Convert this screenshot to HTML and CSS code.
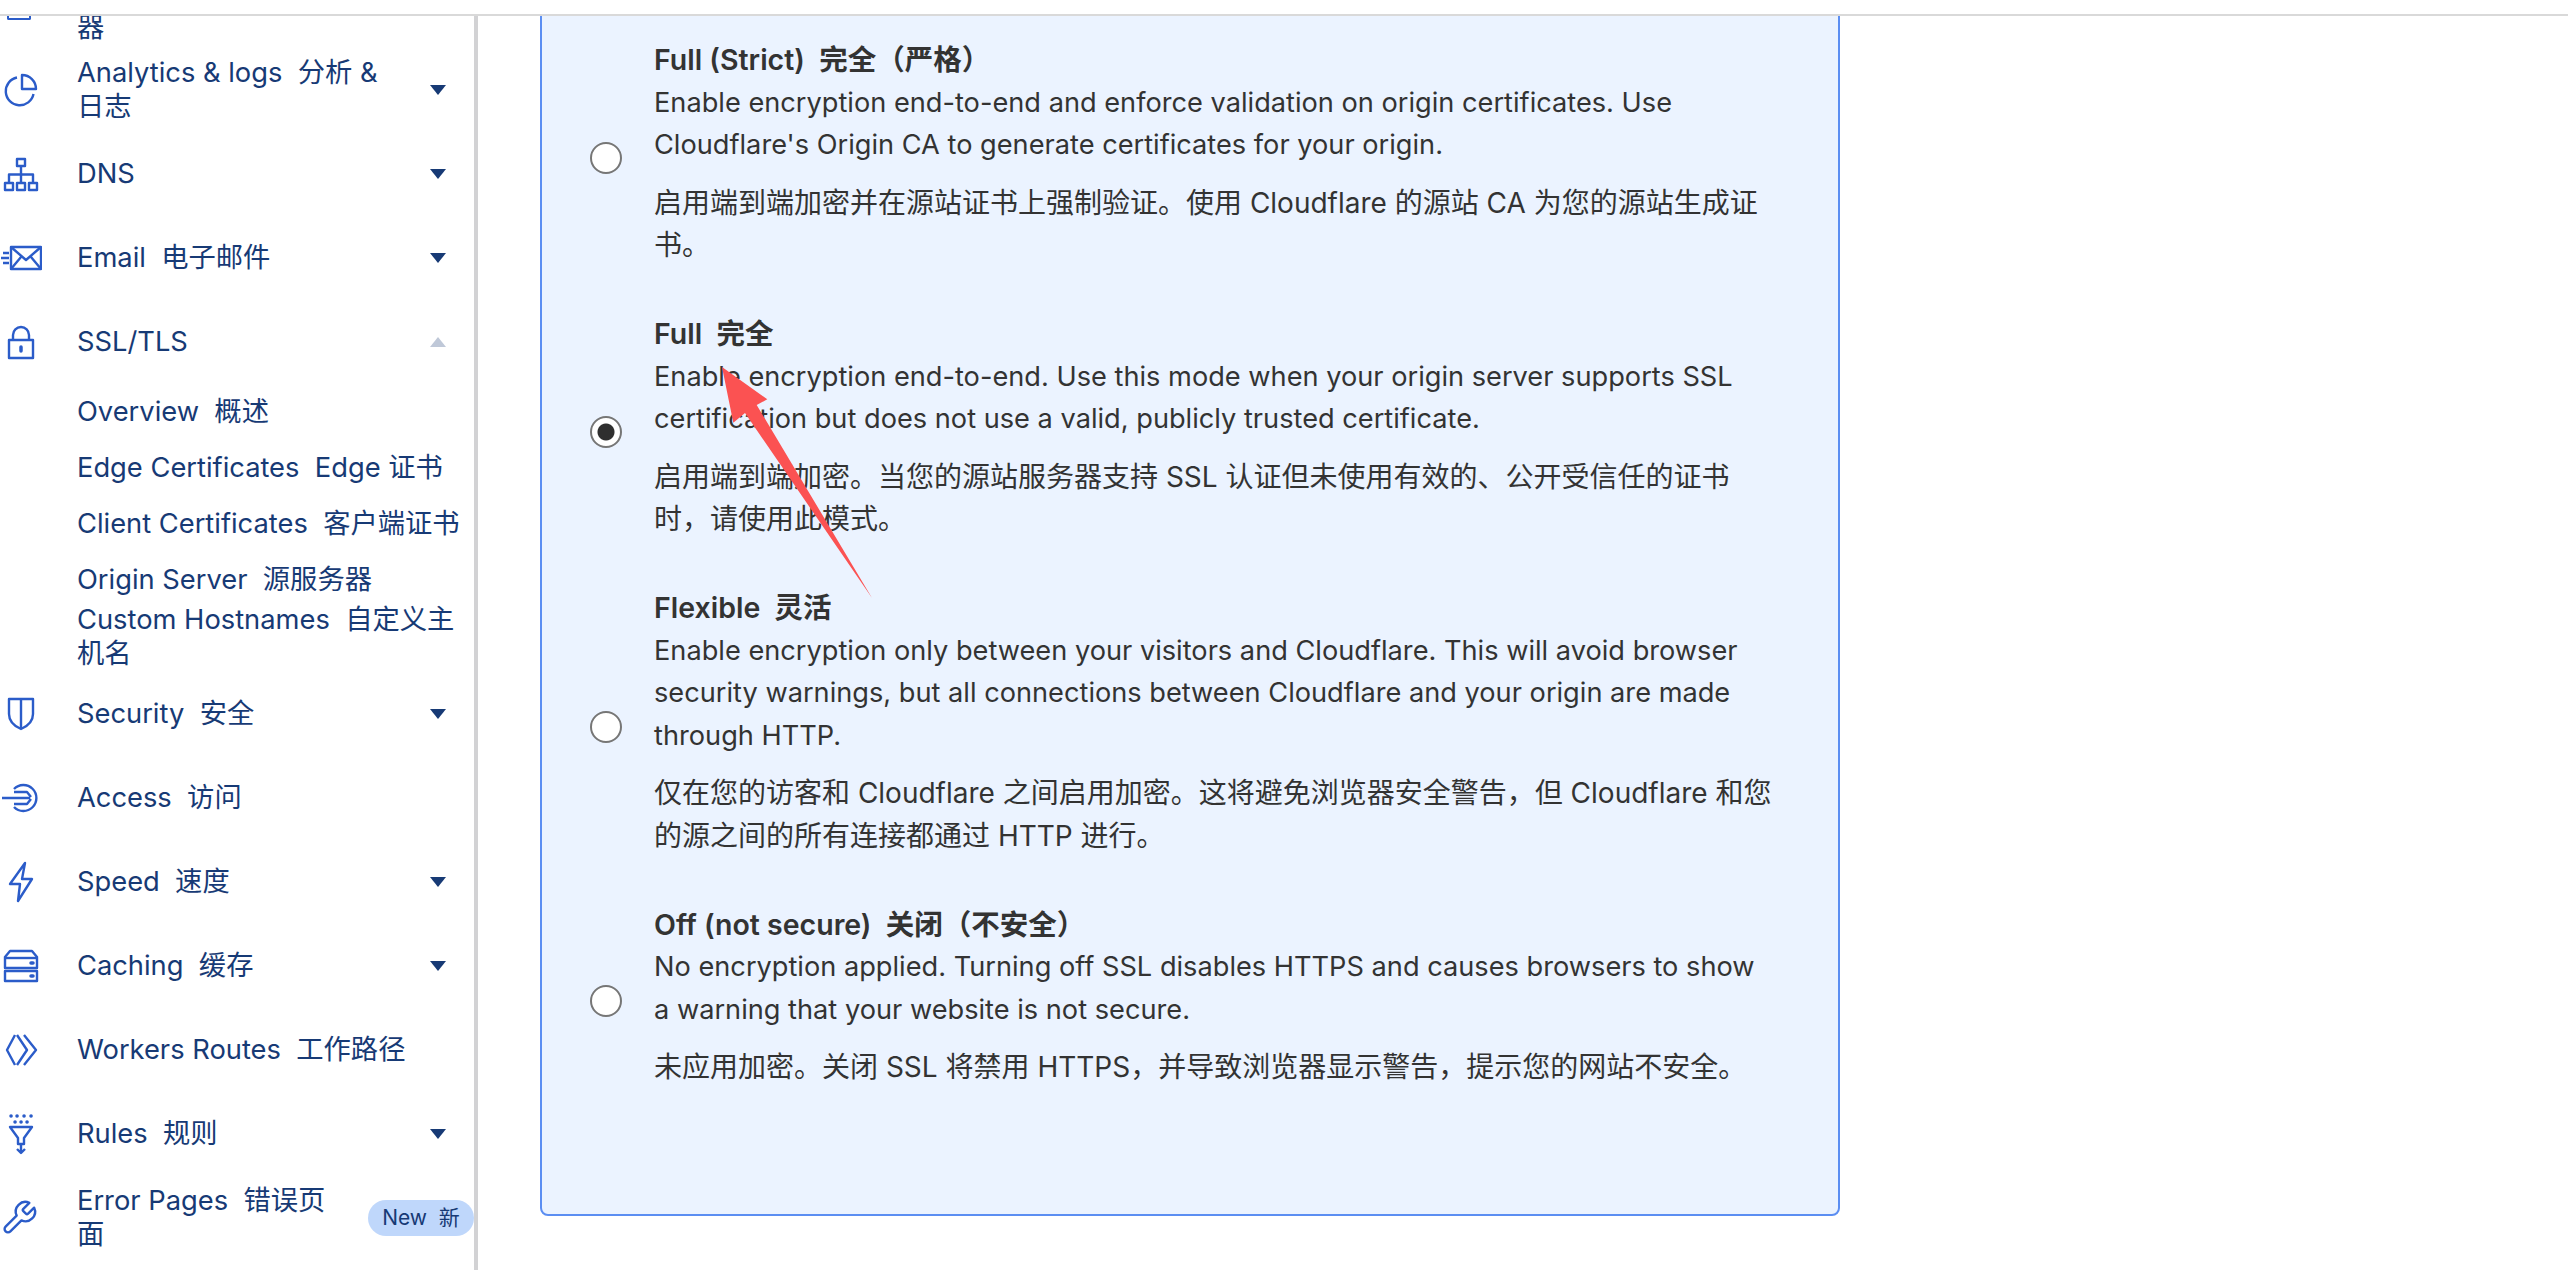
FILE: index.html
```html
<!DOCTYPE html>
<html lang="zh">
<head>
  <meta charset="UTF-8">
  <title>SSL/TLS</title>
  <link rel="stylesheet" href="styles.css">
</head>
<body>
  <div class="topbar"></div>
  <div class="layout">
    <nav class="sidebar">
      <div class="nav-cut">
        <span class="cut-icon"></span>
        <span class="nav-text">器</span>
      </div>

      <div class="nav-item">
        <svg class="ico" viewBox="0 0 42 42"><path d="M17 8.500a14 14 0 1 0 16.500 16.500"/><path d="M22 6a14 14 0 0 1 14 14h-14z"/></svg>
        <span class="nav-text">Analytics &amp; logs&nbsp; 分析 &amp; 日志</span>
        <span class="caret"></span>
      </div>
      <div class="nav-item">
        <svg class="ico" viewBox="0 0 42 42"><rect x="17" y="6" width="8" height="7"/><rect x="5" y="30" width="8" height="7"/><rect x="17" y="30" width="8" height="7"/><rect x="29" y="30" width="8" height="7"/><path d="M21 13v17M9 30v-8.500h24v8.500"/></svg>
        <span class="nav-text">DNS</span>
        <span class="caret"></span>
      </div>
      <div class="nav-item">
        <svg class="ico" viewBox="0 0 42 42"><rect x="11" y="10" width="30" height="22"/><path d="M11 10l15 13 15-13M11 32l10-12M41 32l-10-12"/><path d="M3 16h6M1 21h8M3 26h6"/></svg>
        <span class="nav-text">Email&nbsp; 电子邮件</span>
        <span class="caret"></span>
      </div>
      <div class="nav-item">
        <svg class="ico" viewBox="0 0 42 42"><rect x="9" y="19" width="24" height="18"/><path d="M13 19v-5a8 8 0 0 1 16 0v5"/><path class="thick" d="M21 26v4"/></svg>
        <span class="nav-text">SSL/TLS</span>
        <span class="caret caret-up"></span>
      </div>

      <div class="sub-item">Overview&nbsp; 概述</div>
      <div class="sub-item">Edge Certificates&nbsp; Edge 证书</div>
      <div class="sub-item">Client Certificates&nbsp; 客户端证书</div>
      <div class="sub-item">Origin Server&nbsp; 源服务器</div>
      <div class="sub-item sub-tall">Custom Hostnames&nbsp; 自定义主机名</div>

      <div class="nav-item">
        <svg class="ico" viewBox="0 0 42 42"><path d="M9 6h24v15c0 7-5 12-12 15-7-3-12-8-12-15z"/><path d="M21 6v30"/></svg>
        <span class="nav-text">Security&nbsp; 安全</span>
        <span class="caret"></span>
      </div>
      <div class="nav-item">
        <svg class="ico" viewBox="0 0 42 42"><path d="M14 12a13 13 0 1 1 0 18"/><path d="M2 21h28M14 15h13l4 5M14 27h13l4-5"/></svg>
        <span class="nav-text">Access&nbsp; 访问</span>
      </div>
      <div class="nav-item">
        <svg class="ico" viewBox="0 0 42 42"><path d="M25 2L10 23h10l-2 17 14-22H22z"/></svg>
        <span class="nav-text">Speed&nbsp; 速度</span>
        <span class="caret"></span>
      </div>
      <div class="nav-item">
        <svg class="ico" viewBox="0 0 42 42"><path d="M5 23V12l5-6h22l5 6v11z"/><rect x="5" y="26" width="32" height="10"/><path d="M5 13h32"/><path class="thick" d="M31 18h2M31 31h2"/></svg>
        <span class="nav-text">Caching&nbsp; 缓存</span>
        <span class="caret"></span>
      </div>
      <div class="nav-item">
        <svg class="ico" viewBox="0 0 42 42"><path d="M15 6L7 21l8 15"/><path d="M17 6l10 15-10 15"/><path d="M24 6l12 15-12 15"/></svg>
        <span class="nav-text">Workers Routes&nbsp; 工作路径</span>
      </div>
      <div class="nav-item">
        <svg class="ico" viewBox="0 0 42 42"><path d="M10 14h22l-8 11v6h-6v-6z"/><path d="M21 31v9M17 36l4 4 4-4"/><path class="thick" d="M11 3h.1M17 3h.1M24 3h.1M31 3h.1M15 9h.1M21 9h.1M27 9h.1"/></svg>
        <span class="nav-text">Rules&nbsp; 规则</span>
        <span class="caret"></span>
      </div>
      <div class="nav-item">
        <svg class="ico" viewBox="0 0 42 42"><path transform="translate(-0.200 1.800) scale(1.600)" vector-effect="non-scaling-stroke" d="M14.700 6.300a1 1 0 0 0 0 1.400l1.600 1.600a1 1 0 0 0 1.400 0l3.770-3.770a6 6 0 0 1-7.940 7.940l-6.910 6.910a2.120 2.120 0 0 1-3-3l6.910-6.910a6 6 0 0 1 7.940-7.940l-3.760 3.760z"/></svg>
        <span class="nav-text nav-text-short">Error Pages&nbsp; 错误页面</span>
        <span class="badge">New&nbsp; 新</span>
      </div>
    </nav>

    <main class="main">
      <section class="panel">
        <label class="option">
          <input type="radio" name="mode">
          <div class="option-body">
            <div class="option-title">Full (Strict)&nbsp; 完全（严格）</div>
            <p>Enable encryption end-to-end and enforce validation on origin certificates. Use Cloudflare's Origin CA to generate certificates for your origin.</p>
            <p class="zh">启用端到端加密并在源站证书上强制验证。使用 Cloudflare 的源站 CA 为您的源站生成证书。</p>
          </div>
        </label>
        <label class="option">
          <input type="radio" name="mode" checked>
          <div class="option-body">
            <div class="option-title">Full&nbsp; 完全</div>
            <p>Enable encryption end-to-end. Use this mode when your origin server supports SSL certification but does not use a valid, publicly trusted certificate.</p>
            <p class="zh">启用端到端加密。当您的源站服务器支持 SSL 认证但未使用有效的、公开受信任的证书时，请使用此模式。</p>
          </div>
        </label>
        <label class="option">
          <input type="radio" name="mode">
          <div class="option-body">
            <div class="option-title">Flexible&nbsp; 灵活</div>
            <p>Enable encryption only between your visitors and Cloudflare. This will avoid browser security warnings, but all connections between Cloudflare and your origin are made through HTTP.</p>
            <p class="zh">仅在您的访客和 Cloudflare 之间启用加密。这将避免浏览器安全警告，但 Cloudflare 和您的源之间的所有连接都通过 HTTP 进行。</p>
          </div>
        </label>
        <label class="option">
          <input type="radio" name="mode">
          <div class="option-body">
            <div class="option-title">Off (not secure)&nbsp; 关闭（不安全）</div>
            <p>No encryption applied. Turning off SSL disables HTTPS and causes browsers to show a warning that your website is not secure.</p>
            <p class="zh">未应用加密。关闭 SSL 将禁用 HTTPS，并导致浏览器显示警告，提示您的网站不安全。</p>
          </div>
        </label>
      </section>
    </main>
  </div>

  <!-- annotation drawn over the screenshot -->
  <svg class="arrow" width="160" height="240" viewBox="0 0 160 240"><path d="M2 7L47.300 39.300 36.700 45 152 238 25 53 13.300 62.700z"/></svg>
</body>
</html>
```

FILE: styles.css
```css
* {
  box-sizing: border-box;
}

body {
  margin: 0;
  height: 1270px;
  overflow: hidden;
  background-color: #fff;
  font-family: Inter, "Noto Sans CJK SC", sans-serif;
}

.topbar {
  height: 16px;
  border-bottom: 2px solid #d9d9d9;
}

.layout {
  display: flex;
  height: 1254px;
  overflow: hidden;
}

/* sidebar */
.sidebar {
  width: 478px;
  flex: none;
  border-right: 4px solid #d2d2d4;
  font-size: 27.300px;
  line-height: 34px;
  color: #173a75;
  overflow: hidden;
}

.nav-cut {
  display: flex;
  height: 31.500px;
  gap: 35px;
  align-items: flex-end;
  padding-bottom: 3px;
}

.cut-icon {
  align-self: flex-start;
  width: 24px;
  height: 4px;
  margin-left: 7px;
  margin-right: 11px;
  border: 2px solid #2b5cc9;
  border-top: 0;
  border-radius: 0 0 2px 2px;
}

.nav-item {
  display: flex;
  align-items: center;
  height: 84px;
  padding-right: 28px;
}

.ico {
  width: 42px;
  height: 42px;
  flex: none;
  margin-right: 35px;
  fill: none;
  stroke: #2b5cc9;
  stroke-width: 2.400;
  stroke-linejoin: round;
}

.ico .thick {
  stroke-width: 3.500;
  stroke-linecap: round;
}

.nav-text {
  flex: 1;
  max-width: 332px;
}

.nav-text-short {
  max-width: 270px;
}

.caret {
  width: 0;
  height: 0;
  margin-left: auto;
  border-left: 8px solid transparent;
  border-right: 8px solid transparent;
  border-top: 10px solid #173a75;
}

.caret-up {
  border-top: 0;
  border-bottom: 10px solid #bfc8d8;
}

.badge {
  flex: none;
  width: 106px;
  height: 36px;
  margin-left: auto;
  margin-right: -28px;
  border-radius: 18px;
  background-color: #bfd7fb;
  font-size: 21px;
  line-height: 36px;
  text-align: center;
}

.sub-item {
  display: flex;
  align-items: center;
  min-height: 56px;
  padding: 0 4px 0 77px;
}

.sub-tall {
  min-height: 66px;
  margin: -5px 0 1.500px;
}

/* main panel */
.main {
  flex: 1;
  padding-left: 62px;
}

.panel {
  width: 1300px;
  height: 1230px;
  margin-top: -30px;
  padding: 51px 62px 0 48px;
  border: 2px solid #5b8ef2;
  border-radius: 8px;
  background-color: #ebf3ff;
  font-size: 27.200px;
  line-height: 42.500px;
  color: #333;
}

.option {
  display: flex;
  align-items: center;
  gap: 32px;
  padding-bottom: 46.600px;
}

.option input {
  appearance: none;
  flex: none;
  width: 32px;
  height: 32px;
  margin: 10px 0 0;
  border: 2px solid #767676;
  border-radius: 50%;
  background-color: #fff;
}

.option input:checked {
  background: radial-gradient(circle, #2f2f2f 8px, #fff 9px);
}

.option-title {
  font-size: 28.500px;
  font-weight: 600;
}

.option p {
  margin: 0;
}

.option p + p {
  margin-top: 15px;
}

.option .zh {
  font-size: 28px;
}

.arrow {
  position: absolute;
  left: 720px;
  top: 360px;
  fill: #fb5252;
}
```
